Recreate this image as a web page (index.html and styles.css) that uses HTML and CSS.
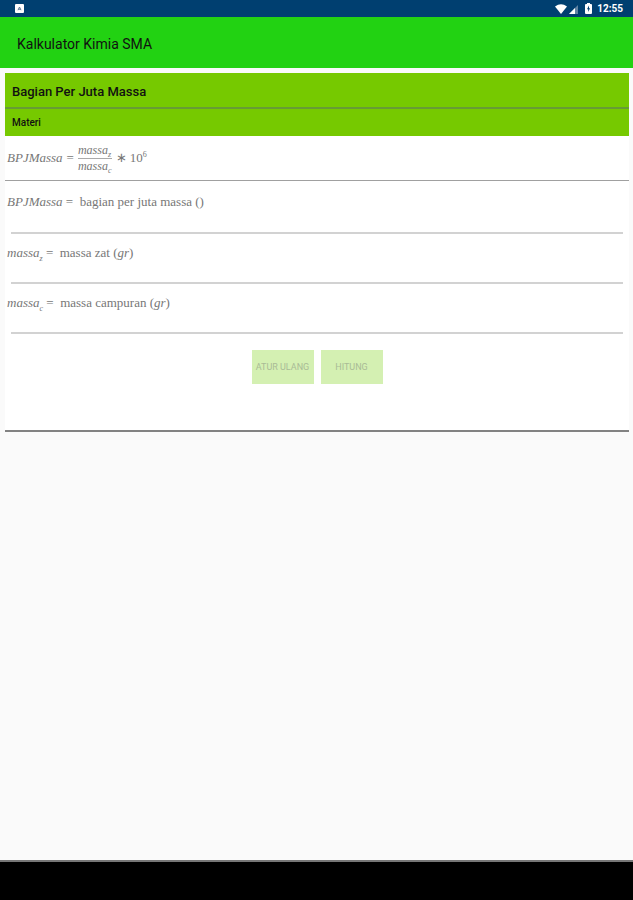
FILE: index.html
```html
<!DOCTYPE html>
<html lang="id">

<head>
    <meta charset="utf-8">
    <meta name="viewport" content="width=device-width, initial-scale=1">
    <title>Kalkulator Kimia SMA</title>
    <link rel="stylesheet" href="styles.css">
</head>

<body>
    <div class="statusbar">
        <svg class="notif" width="9" height="9" viewBox="0 0 9 9">
            <rect width="9" height="9" rx="1" fill="#fff" />
            <path d="M3 6.2L4.5 3L6 6.2M3.5 5.2H5.5" fill="none" stroke="#5b7896" stroke-width="1" />
        </svg>
        <svg width="12" height="10" viewBox="0 0 12 10">
            <path d="M0 2.5Q6 -2 12 2.5L6 10Z" fill="#fff" />
        </svg>
        <svg class="signal" width="9" height="10" viewBox="0 0 9 10">
            <path d="M0 10L9 1V10Z" fill="#5f83a3" />
            <path d="M0 10L6 4V10Z" fill="#fff" />
        </svg>
        <svg class="battery" width="7" height="11" viewBox="0 0 7 11">
            <path d="M2 0H5V1H6Q7 1 7 2V10Q7 11 6 11H1Q0 11 0 10V2Q0 1 1 1H2Z" fill="#fff" />
            <path d="M4 2.5L2 6.3H3.2V9L5 5.3H4Z" fill="#003f70" />
        </svg>
        <span class="clock">12:55</span>
    </div>
    <header class="appbar">
        <h1>Kalkulator Kimia SMA</h1>
    </header>
    <main>
        <form class="card">
            <h2>Bagian Per Juta Massa</h2>
            <h3>Materi</h3>
            <div class="formula">
                <i>BPJMassa</i>
                <span>=</span>
                <span class="fraction">
                    <i>massa<sub>z</sub></i>
                    <i>massa<sub>c</sub></i>
                </span>
                <span>∗ 10<sup>6</sup></span>
            </div>
            <div class="field">
                <label for="bpj"><i>BPJMassa</i> = &nbsp;bagian per juta massa ()</label>
                <input type="text" id="bpj">
            </div>
            <div class="field">
                <label for="zat"><i>massa<sub>z</sub></i> = &nbsp;massa zat (<i>gr</i>)</label>
                <input type="text" id="zat">
            </div>
            <div class="field">
                <label for="campuran"><i>massa<sub>c</sub></i> = &nbsp;massa campuran (<i>gr</i>)</label>
                <input type="text" id="campuran">
            </div>
            <div class="buttons">
                <button type="reset" disabled>ATUR ULANG</button>
                <button type="submit" disabled>HITUNG</button>
            </div>
        </form>
    </main>
    <footer class="navbar"></footer>
</body>

</html>
```
FILE: styles.css
```css
* {
    box-sizing: border-box;
}

body {
    margin: 0;
    min-height: 100vh;
    display: flex;
    flex-direction: column;
    background-color: #fafafa;
    font-family: Roboto, sans-serif;
    color: #111;
}

.statusbar {
    display: flex;
    align-items: center;
    height: 17px;
    padding: 0 10px 0 15px;
    background-color: #003f70;
}

.notif {
    margin-right: auto;
}

.signal {
    margin-left: 2px;
}

.battery {
    margin-left: 7px;
}

.clock {
    margin-left: 5px;
    color: #fff;
    font-size: 10px;
    font-weight: 700;
}

.appbar {
    display: flex;
    align-items: center;
    height: 51px;
    padding: 2px 17px 0;
    background-color: #22d212;
}

h1,
h2,
h3 {
    margin: 0;
    font-weight: 500;
}

h1 {
    font-size: 14px;
    font-weight: 400;
}

main {
    flex: 1;
    padding: 5px 4px 0 5px;
}

.card {
    padding-bottom: 46px;
    background-color: #fff;
    border-bottom: 2px solid #828282;
}

h2 {
    padding: 11px 7px 7px;
    font-size: 13px;
    line-height: 16px;
    background-color: #76c900;
    border-bottom: 2px solid #679b35;
}

h3 {
    padding: 6px 7px 5px;
    font-size: 10px;
    line-height: 16px;
    background-color: #76c900;
}

.formula,
.field label {
    font-family: "Liberation Serif", serif;
    font-size: 13px;
    color: #777;
}

.formula {
    display: flex;
    align-items: center;
    gap: 4px;
    height: 45px;
    padding: 0 2px;
    border-bottom: 1px solid #a0a0a0;
}

.fraction {
    display: flex;
    flex-direction: column;
    font-size: 12px;
    line-height: 15px;
}

.fraction i:first-child {
    border-bottom: 1px solid #aaa;
}

sub,
sup {
    font-size: 8px;
    line-height: 0;
}

.field {
    display: flex;
    flex-direction: column;
    height: 50px;
    padding-top: 9px;
}

.field label {
    padding: 0 2px;
    line-height: 20px;
}

.field input {
    flex: 1;
    min-height: 0;
    margin: 0 6px;
    padding: 0;
    border: none;
    border-bottom: 2px solid #d2d2d2;
    outline: none;
    background: transparent;
    font-size: 12px;
}

.formula + .field {
    height: 53px;
    padding-top: 11px;
}

.buttons {
    display: flex;
    justify-content: center;
    gap: 7px;
    padding-top: 16px;
}

button {
    width: 62px;
    height: 34px;
    padding: 0;
    border: none;
    background-color: #d4f0b2;
    color: #a9bb96;
    font-family: Roboto, sans-serif;
    font-size: 9px;
}

.navbar {
    height: 40px;
    background-color: #000;
    border-top: 2px solid #777;
}
```
